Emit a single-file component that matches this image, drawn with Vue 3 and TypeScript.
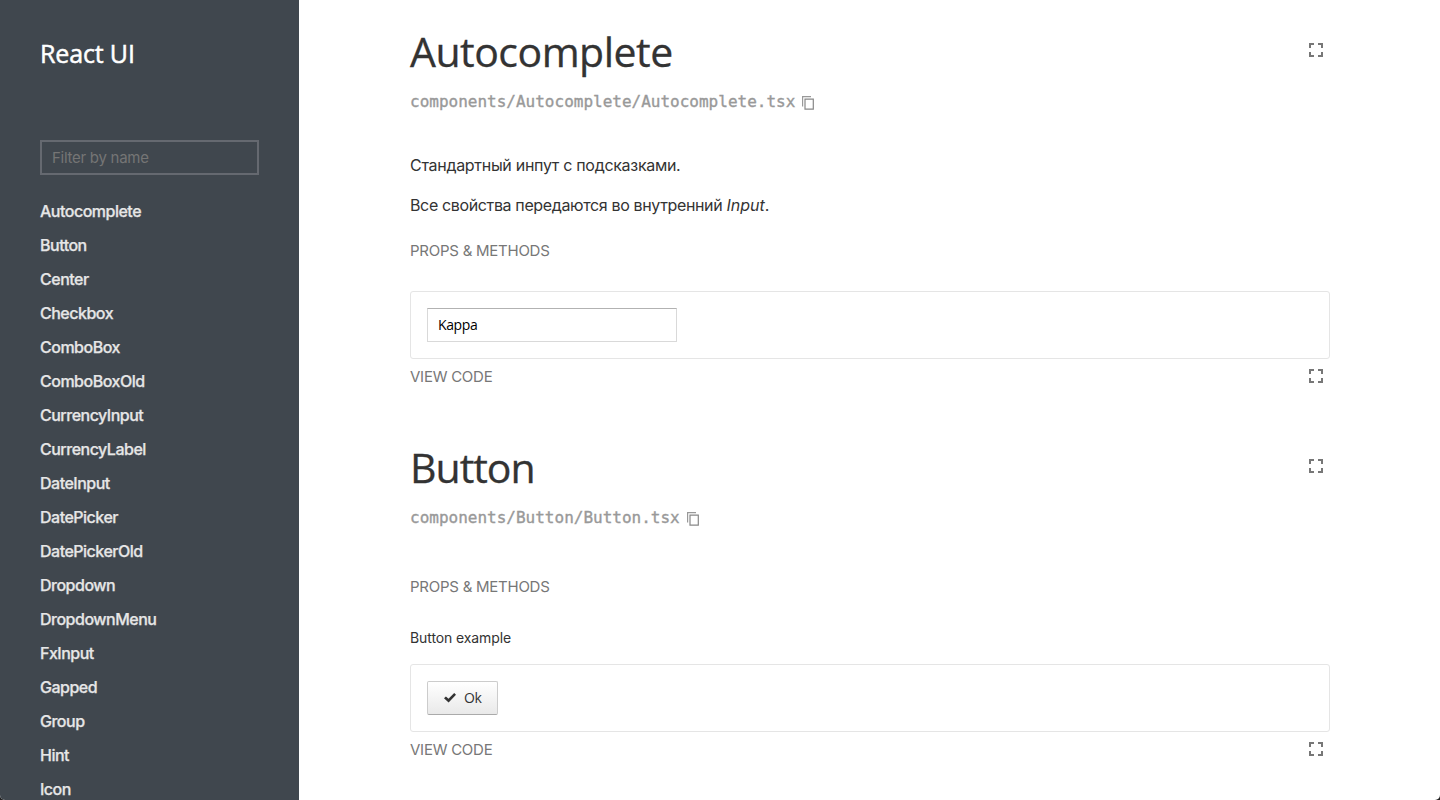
<script setup lang="ts">
import { ref } from 'vue'

interface Section {
  name: string
  path: string
}

const filter = ref<string>('')
const value = ref<string>('Kappa')
const names: string[] = [
  'Autocomplete', 'Button', 'Center', 'Checkbox', 'ComboBox', 'ComboBoxOld',
  'CurrencyInput', 'CurrencyLabel', 'DateInput', 'DatePicker', 'DatePickerOld',
  'Dropdown', 'DropdownMenu', 'FxInput', 'Gapped', 'Group', 'Hint', 'Icon',
]
const sections: Section[] = [
  { name: 'Autocomplete', path: 'components/Autocomplete/Autocomplete.tsx' },
  { name: 'Button', path: 'components/Button/Button.tsx' },
]
</script>

<template>
  <div class="page">
    <aside class="sidebar">
      <h2 class="brand">React UI</h2>
      <input v-model="filter" class="filter" placeholder="Filter by name" />
      <nav class="nav">
        <a v-for="n in names" :key="n" class="link">{{ n }}</a>
      </nav>
    </aside>
    <main class="main">
      <section v-for="s in sections" :key="s.name" class="section" :class="s.name.toLowerCase()">
        <header class="head">
          <h1 class="title">{{ s.name }}</h1>
          <svg class="full" width="14" height="14" viewBox="0 0 14 14"><path d="M0 5V0h5v2H2v3zM9 0h5v5h-2V2H9zM0 9h2v3h3v2H0zM12 9h2v5H9v-2h3z" /></svg>
        </header>
        <div class="path">
          <span class="file">{{ s.path }}</span>
          <svg class="copy" width="12" height="14" viewBox="0 0 12 14"><path class="back" d="M.6 10.5V.6H9" /><path d="M3 3.2h8.3v10H3z" /></svg>
        </div>
        <div v-if="s.name === 'Autocomplete'" class="desc">
          <p class="p1">Стандартный инпут с подсказками.</p>
          <p class="p2">Все свойства передаются во внутренний <em>Input</em>.</p>
        </div>
        <div class="caps props">PROPS &amp; METHODS</div>
        <div v-if="s.name === 'Button'" class="example">Button example</div>
        <div class="box">
          <input v-if="s.name === 'Autocomplete'" v-model="value" class="input" />
          <button v-else class="btn">
            <svg width="12" height="10" viewBox="0 0 12 10"><path d="M0 5.3 1.9 3.4 4.5 5.7 10.2 0 12 1.8 4.6 9.6z" /></svg>
            <span>Ok</span>
          </button>
        </div>
        <footer class="foot">
          <span class="caps code">VIEW CODE</span>
          <svg class="full" width="14" height="14" viewBox="0 0 14 14"><path d="M0 5V0h5v2H2v3zM9 0h5v5h-2V2H9zM0 9h2v3h3v2H0zM12 9h2v5H9v-2h3z" /></svg>
        </footer>
      </section>
    </main>
  </div>
</template>

<style>
body { background: #222; overflow: hidden; }
</style>

<style scoped>
* { box-sizing: border-box; }
.page { display: flex; width: 1440px; height: 800px; overflow: hidden; background: #fff; border-radius: 0 0 5px 5px; font-family: Inter, sans-serif; color: #333; }
.sidebar { width: 299px; height: 800px; flex: none; padding: 0 40px; background: #40474e; overflow: hidden; }
.brand { margin: 35px 0 0; font: 500 25px/36px "Open Sans", sans-serif; color: #fff; letter-spacing: -0.15px; -webkit-text-stroke: 0.5px #fff; white-space: nowrap; }
.filter { display: block; width: 219px; height: 35px; margin: 69px 0 19px; padding: 0 10px; border: 2px solid #656970; background: transparent; font: 15px Inter, sans-serif; letter-spacing: -0.27px; color: #fff; outline: 0; }
.filter::placeholder { color: #757575; opacity: 1; }
.nav { display: flex; flex-direction: column; }
.link { height: 34px; line-height: 34px; font-size: 16px; font-weight: 500; letter-spacing: -0.5px; color: #e6e6e6; -webkit-text-stroke: 0.25px #e6e6e6; white-space: nowrap; }
.main { width: 920px; margin-left: 111px; }
.section { height: 416px; }
.head { display: flex; justify-content: space-between; padding: 20px 7px 0 0; height: 86px; }
.title { margin: 0; font: 400 41px/62px "Open Sans", sans-serif; letter-spacing: -0.5px; color: #333; -webkit-text-stroke: 0.3px #333; }
.button .title { letter-spacing: -1px; }
.full { display: block; fill: #777; }
.head .full { margin-top: 23px; }
.path { display: flex; height: 30px; color: #999; }
.file { font: 16px/32px "DejaVu Sans Mono", monospace; -webkit-text-stroke: 0.35px #999; }
.copy { margin: 10px 0 0 7px; fill: none; stroke: #888; stroke-width: 1.2; }
.copy .back { stroke: #999; }
.desc { padding-top: 29px; height: 119px; font-size: 16px; }
.desc p { margin: 0; height: 40px; line-height: 40px; letter-spacing: -0.3px; white-space: nowrap; }
.desc .p2 { letter-spacing: -0.36px; }
.p2 em { letter-spacing: 0; }
.caps { font-size: 15px; letter-spacing: -0.25px; color: #777; }
.props { height: 32px; line-height: 32px; }
.button .props { margin-top: 39px; }
.autocomplete .box { margin-top: 24px; }
.example { height: 30px; line-height: 30px; margin: 20px 0 11px; font-size: 14px; letter-spacing: -0.1px; }
.box { height: 68px; padding: 16px; border: 1px solid #e5e5e5; border-radius: 3px; }
.input { display: block; width: 250px; height: 34px; padding: 0 10px 2px; border: 1px solid #d9d9d9; border-top-color: #b2b2b2; font: 14px "Open Sans", sans-serif; letter-spacing: -0.4px; color: #000; outline: 0; }
.btn { display: flex; align-items: center; width: 71px; height: 34px; padding: 0 0 0 16px; border: 1px solid #ccc; border-bottom-color: #aaa; border-radius: 2px; background: linear-gradient(#fff, #e9e9e9); font: 14px "Open Sans", sans-serif; letter-spacing: -0.3px; color: #333; gap: 8px; }
.btn span { padding-bottom: 2px; }
.btn svg { fill: #333; }
.foot { display: flex; justify-content: space-between; padding-right: 7px; height: 36px; }
.foot .full { margin-top: 10px; }
.code { line-height: 36px; }
</style>
